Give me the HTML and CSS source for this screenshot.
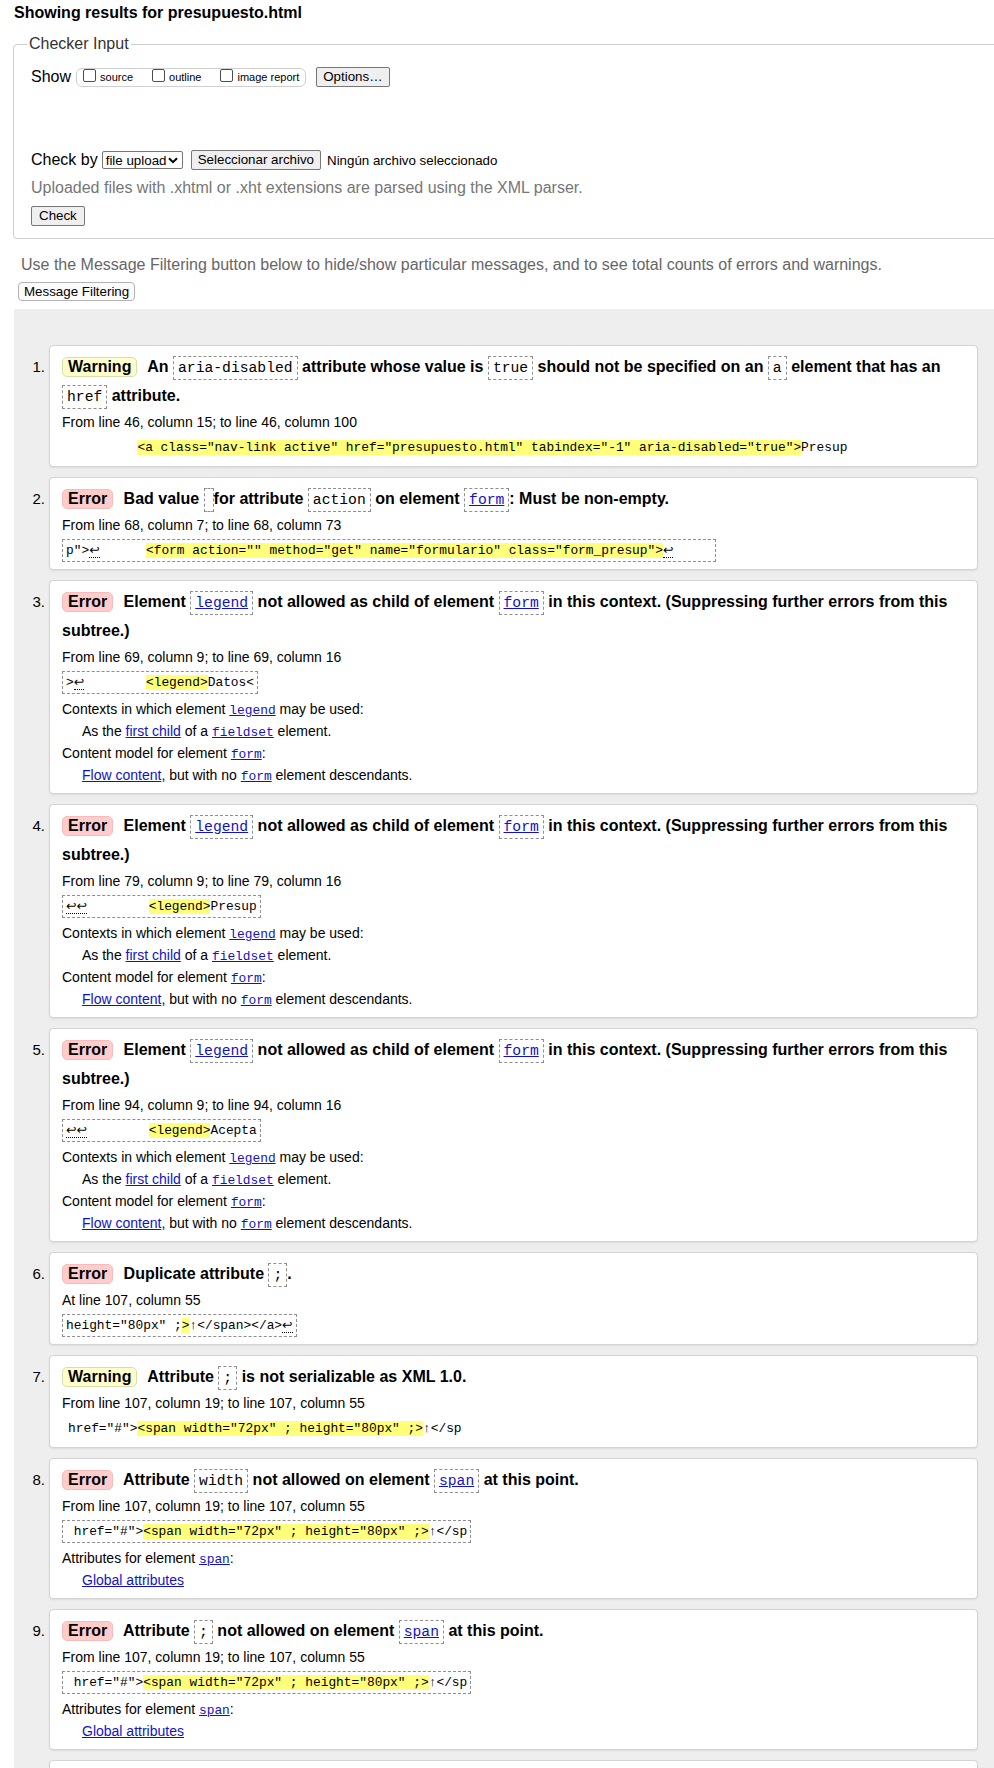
FILE: index.html
```html
<!DOCTYPE html>
<html lang="en">
<head>
<meta charset="utf-8">
<title>Showing results for presupuesto.html - Nu Html Checker</title>
<link rel="stylesheet" href="styles.css">
</head>
<body>
<h2 class="title">Showing results for presupuesto.html</h2>

<fieldset class="checker">
  <legend>Checker Input</legend>
  <div class="row show-row">
    <span class="lbl">Show</span>
    <span class="showgroup">
      <label class="opt"><input type="checkbox"><span>source</span></label>
      <label class="opt"><input type="checkbox"><span>outline</span></label>
      <label class="opt"><input type="checkbox"><span>image report</span></label>
    </span>
    <button class="btn options" type="button">Options…</button>
  </div>
  <div class="row checkby-row">
    <span class="lbl">Check by</span>
    <span class="select">file upload<svg width="10" height="7" viewBox="0 0 10 7"><path d="M1 1.2 L5 5.2 L9 1.2" fill="none" stroke="#000" stroke-width="2"/></svg></span>
    <button class="btn file" type="button">Seleccionar archivo</button>
    <span class="nofile">Ningún archivo seleccionado</span>
  </div>
  <p class="hint">Uploaded files with .xhtml or .xht extensions are parsed using the XML parser.</p>
  <button class="btn check" type="button">Check</button>
</fieldset>

<p class="filter-hint">Use the Message Filtering button below to hide/show particular messages, and to see total counts of errors and warnings.</p>
<button class="btn filter" type="button">Message Filtering</button>

<div class="results">
  <ol class="messages">
    <li class="msg warning">
      <span class="num">1.</span>
      <div class="card">
        <p class="head"><strong class="badge">Warning</strong> An <code>aria-disabled</code> attribute whose value is <code>true</code> should not be specified on an <code>a</code> element that has an <code>href</code> attribute.</p>
        <p class="loc">From line 46, column 15; to line 46, column 100</p>
        <pre class="extract plain">         <mark>&lt;a class="nav-link active" href="presupuesto.html" tabindex="-1" aria-disabled="true"&gt;</mark>Presup</pre>
      </div>
    </li>
    <li class="msg error">
      <span class="num">2.</span>
      <div class="card">
        <p class="head"><strong class="badge">Error</strong> Bad value <code></code> for attribute <code>action</code> on element <code><a href="#">form</a></code>: Must be non-empty.</p>
        <p class="loc">From line 68, column 7; to line 68, column 73</p>
        <pre class="extract">p"&gt;<span class="lf">↩</span>      <mark>&lt;form action="" method="get" name="formulario" class="form_presup"&gt;</mark><span class="lf">↩</span>     </pre>
      </div>
    </li>
    <li class="msg error">
      <span class="num">3.</span>
      <div class="card">
        <p class="head"><strong class="badge">Error</strong> Element <code><a href="#">legend</a></code> not allowed as child of element <code><a href="#">form</a></code> in this context. (Suppressing further errors from this subtree.)</p>
        <p class="loc">From line 69, column 9; to line 69, column 16</p>
        <pre class="extract">&gt;<span class="lf">↩</span>        <mark>&lt;legend&gt;</mark>Datos&lt;</pre>
        <dl class="ctx">
          <dt>Contexts in which element <a href="#" class="m">legend</a> may be used:</dt>
          <dd>As the <a href="#">first child</a> of a <a href="#" class="m">fieldset</a> element.</dd>
          <dt>Content model for element <a href="#" class="m">form</a>:</dt>
          <dd><a href="#">Flow content</a>, but with no <a href="#" class="m">form</a> element descendants.</dd>
        </dl>
      </div>
    </li>
    <li class="msg error">
      <span class="num">4.</span>
      <div class="card">
        <p class="head"><strong class="badge">Error</strong> Element <code><a href="#">legend</a></code> not allowed as child of element <code><a href="#">form</a></code> in this context. (Suppressing further errors from this subtree.)</p>
        <p class="loc">From line 79, column 9; to line 79, column 16</p>
        <pre class="extract"><span class="lf">↩↩</span>        <mark>&lt;legend&gt;</mark>Presup</pre>
        <dl class="ctx">
          <dt>Contexts in which element <a href="#" class="m">legend</a> may be used:</dt>
          <dd>As the <a href="#">first child</a> of a <a href="#" class="m">fieldset</a> element.</dd>
          <dt>Content model for element <a href="#" class="m">form</a>:</dt>
          <dd><a href="#">Flow content</a>, but with no <a href="#" class="m">form</a> element descendants.</dd>
        </dl>
      </div>
    </li>
    <li class="msg error">
      <span class="num">5.</span>
      <div class="card">
        <p class="head"><strong class="badge">Error</strong> Element <code><a href="#">legend</a></code> not allowed as child of element <code><a href="#">form</a></code> in this context. (Suppressing further errors from this subtree.)</p>
        <p class="loc">From line 94, column 9; to line 94, column 16</p>
        <pre class="extract"><span class="lf">↩↩</span>        <mark>&lt;legend&gt;</mark>Acepta</pre>
        <dl class="ctx">
          <dt>Contexts in which element <a href="#" class="m">legend</a> may be used:</dt>
          <dd>As the <a href="#">first child</a> of a <a href="#" class="m">fieldset</a> element.</dd>
          <dt>Content model for element <a href="#" class="m">form</a>:</dt>
          <dd><a href="#">Flow content</a>, but with no <a href="#" class="m">form</a> element descendants.</dd>
        </dl>
      </div>
    </li>
    <li class="msg error">
      <span class="num">6.</span>
      <div class="card">
        <p class="head"><strong class="badge">Error</strong> Duplicate attribute <code>;</code>.</p>
        <p class="loc">At line 107, column 55</p>
        <pre class="extract">height="80px" ;<mark>&gt;</mark>↑&lt;/span&gt;&lt;/a&gt;<span class="lf">↩</span></pre>
      </div>
    </li>
    <li class="msg warning">
      <span class="num">7.</span>
      <div class="card">
        <p class="head"><strong class="badge">Warning</strong> Attribute <code>;</code> is not serializable as XML 1.0.</p>
        <p class="loc">From line 107, column 19; to line 107, column 55</p>
        <pre class="extract plain">href="#"&gt;<mark>&lt;span width="72px" ; height="80px" ;&gt;</mark>↑&lt;/sp</pre>
      </div>
    </li>
    <li class="msg error">
      <span class="num">8.</span>
      <div class="card">
        <p class="head"><strong class="badge">Error</strong> Attribute <code>width</code> not allowed on element <code><a href="#">span</a></code> at this point.</p>
        <p class="loc">From line 107, column 19; to line 107, column 55</p>
        <pre class="extract"> href="#"&gt;<mark>&lt;span width="72px" ; height="80px" ;&gt;</mark>↑&lt;/sp</pre>
        <dl class="ctx">
          <dt>Attributes for element <a href="#" class="m">span</a>:</dt>
          <dd><a href="#">Global attributes</a></dd>
        </dl>
      </div>
    </li>
    <li class="msg error">
      <span class="num">9.</span>
      <div class="card">
        <p class="head"><strong class="badge">Error</strong> Attribute <code>;</code> not allowed on element <code><a href="#">span</a></code> at this point.</p>
        <p class="loc">From line 107, column 19; to line 107, column 55</p>
        <pre class="extract"> href="#"&gt;<mark>&lt;span width="72px" ; height="80px" ;&gt;</mark>↑&lt;/sp</pre>
        <dl class="ctx">
          <dt>Attributes for element <a href="#" class="m">span</a>:</dt>
          <dd><a href="#">Global attributes</a></dd>
        </dl>
      </div>
    </li>
    <li class="msg error">
      <span class="num">10.</span>
      <div class="card">
        <p class="head"><strong class="badge">Error</strong> Attribute <code>height</code> not allowed on element <code><a href="#">span</a></code> at this point.</p>
        <p class="loc">From line 107, column 19; to line 107, column 55</p>
        <pre class="extract"> href="#"&gt;<mark>&lt;span width="72px" ; height="80px" ;&gt;</mark>↑&lt;/sp</pre>
      </div>
    </li>
  </ol>
</div>
</body>
</html>
```

FILE: styles.css
```css
html {
  overflow: hidden;
}

body {
  margin: 0;
  background: #fff;
  color: #000;
  font-family: "Liberation Sans", Arial, sans-serif;
}

.title {
  margin: 0;
  padding: 4px 0 0 14px;
  font-size: 16px;
  line-height: 18px;
  font-weight: bold;
}

/* ---------- checker input ---------- */
.checker {
  margin: 13px -40px 0 13px;
  padding: 0 0 12px 17px;
  border: 1px solid #cfcfcf;
  border-radius: 4px;
  min-width: 0;
}

.checker legend {
  margin-left: -4px;
  padding: 0 2px;
  font-size: 16px;
  line-height: 18px;
  color: #333;
}

.row {
  display: flex;
  align-items: center;
}

.show-row {
  height: 20px;
  margin-top: 14px;
}

.lbl {
  font-size: 16px;
  line-height: 18px;
}

.showgroup {
  display: inline-flex;
  align-items: center;
  gap: 19px;
  height: 17px;
  margin-left: 5px;
  padding: 0 6px;
  border: 1px solid #cfcfcf;
  border-radius: 6px;
}

.opt {
  display: inline-flex;
  align-items: center;
  gap: 4px;
  font-size: 11px;
  line-height: 13px;
}

.opt input {
  appearance: none;
  -webkit-appearance: none;
  width: 13px;
  height: 13px;
  margin: 0 0 3px 0;
  border: 1px solid #4d4d4d;
  border-radius: 2px;
  background: #fff;
}

.btn {
  box-sizing: border-box;
  height: 20px;
  padding: 0 7px;
  border: 1px solid #767676;
  border-radius: 2px;
  background: #efefef;
  color: #000;
  font-family: "Liberation Sans", Arial, sans-serif;
  font-size: 13.33px;
  line-height: 18px;
}

.options {
  margin-left: 10px;
  padding: 0 6px;
}

.checkby-row {
  height: 20px;
  margin-top: 63px;
}

.select {
  box-sizing: border-box;
  display: inline-flex;
  align-items: center;
  justify-content: space-between;
  width: 81px;
  height: 18px;
  margin-left: 4px;
  padding: 0 4px 0 3px;
  border: 1px solid #767676;
  border-radius: 2px;
  background: #fff;
  font-size: 13.33px;
}

.file {
  margin-left: 8px;
  padding: 0 6px;
}

.nofile {
  margin-left: 6px;
  font-size: 13.33px;
}

.hint {
  margin: 9px 0 0;
  font-size: 16px;
  line-height: 18px;
  color: #767676;
}

.check {
  display: block;
  margin-top: 9px;
}

.filter-hint {
  margin: 17px 0 0 21px;
  font-size: 16px;
  line-height: 18px;
  color: #666;
}

.filter {
  display: block;
  height: 19px;
  margin: 8px 0 0 18px;
  padding: 0 5px;
  border: 1px solid #b3b3b3;
  border-radius: 4px;
  background: #fbfbfb;
  line-height: 17px;
}

/* ---------- results ---------- */
.results {
  margin: 8px 0 0 14px;
  padding: 36px 16px 0 0;
  background: #eeeeee;
}

.messages {
  margin: 0;
  padding: 0;
  list-style: none;
}

.msg {
  display: flex;
  align-items: flex-start;
  margin-bottom: 10px;
}

.num {
  flex: none;
  width: 31px;
  margin-right: 4px;
  padding-top: 7px;
  text-align: right;
  font-size: 15px;
  line-height: 29px;
}

.card {
  flex: 1;
  min-width: 0;
  padding: 6px 12px 7px 12px;
  border: 1px solid #d4d4d4;
  border-radius: 4px;
  background: #fff;
  box-shadow: 0 1px 2px rgba(0, 0, 0, 0.08);
}

.head {
  margin: 0;
  font-size: 16px;
  line-height: 29px;
  font-weight: bold;
}

.badge {
  display: inline-block;
  margin-right: 6px;
  padding: 0 5px;
  border: 1px solid;
  border-radius: 5px;
  font-size: 16px;
  line-height: 18px;
  font-weight: bold;
}

.warning .badge {
  background: #ffffcc;
  border-color: #dcdca8;
}

.error .badge {
  background: #ffcccc;
  border-color: #f6bcbc;
}

.head code {
  padding: 3px 4px;
  border: 1px dashed #8f8f8f;
  font-family: "Liberation Mono", "DejaVu Sans Mono", monospace;
  font-size: 14.7px;
  line-height: 1;
  font-weight: normal;
}

a {
  color: #1111cc;
  text-decoration: underline;
}

.loc {
  margin: 2px 0 0;
  font-size: 14px;
  line-height: 20px;
}

.extract {
  width: fit-content;
  margin: 4px 0 0;
  padding: 2px 3px;
  border: 1px dashed #8f8f8f;
  font-family: "Liberation Mono", "DejaVu Sans Mono", monospace;
  font-size: 12.87px;
  line-height: 17px;
  white-space: pre;
}

.extract.plain {
  padding-left: 5px;
  border-color: transparent;
}

mark {
  background: #ffff7a;
  color: inherit;
  line-height: 1;
}

.lf {
  border-bottom: 1px dotted #000;
  font-family: "DejaVu Sans", sans-serif;
  font-size: 12.5px;
  line-height: 1;
}

.ctx {
  margin: 4px 0 0;
  font-size: 14px;
  line-height: 22px;
}

.ctx dt,
.ctx dd {
  margin: 0;
}

.ctx dd {
  margin-left: 20px;
}

a.m {
  font-family: "Liberation Mono", "DejaVu Sans Mono", monospace;
  font-size: 12.87px;
  line-height: 1;
}
```
